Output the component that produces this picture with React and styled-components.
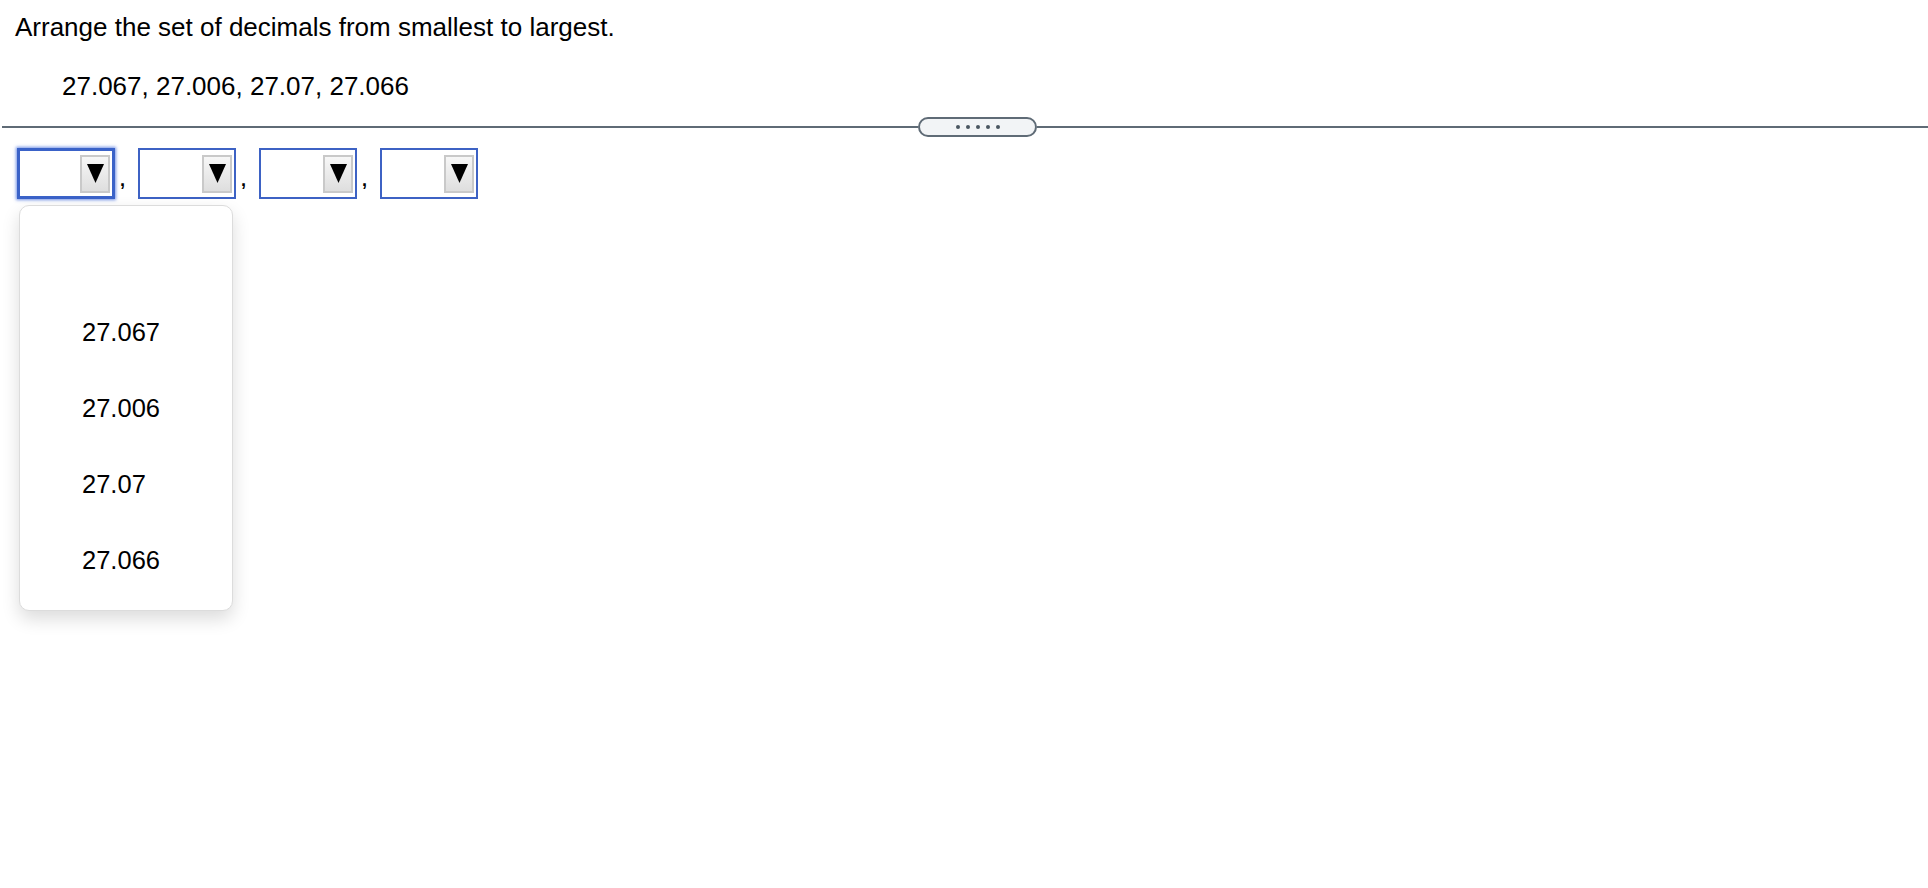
import React from 'react';
import styled, { createGlobalStyle } from 'styled-components';

const GlobalStyle = createGlobalStyle`
  html, body {
    margin: 0;
    padding: 0;
    background: #ffffff;
    font-family: "Liberation Sans", Arial, sans-serif;
    color: #000000;
  }
`

const Page = styled.div`
  width: 1928px;
  height: 888px;
  overflow: hidden;
`

const Question = styled.div`
  padding: 12px 0 0 15px;
  .prompt {
    margin: 0;
    font-size: 26px;
    line-height: 30px;
  }
  .values {
    margin: 29px 0 0 47px;
    font-size: 26px;
    line-height: 30px;
  }
`

const Divider = styled.div`
  display: flex;
  align-items: center;
  margin: 16px 0 0 2px;
  height: 20px;
  .line {
    height: 2px;
    background: #5f6b76;
  }
  .line.left {
    width: 916px;
  }
  .line.right {
    flex: 1;
  }
`

const Pill = styled.div`
  box-sizing: border-box;
  width: 119px;
  height: 20px;
  border: 2px solid #5f6b76;
  border-radius: 10px;
  background: #f2f4f6;
  display: flex;
  align-items: center;
  justify-content: center;
  gap: 6px;
  span {
    width: 4px;
    height: 4px;
    border-radius: 50%;
    background: #4a5560;
  }
`

const AnswerRow = styled.div`
  position: relative;
  display: flex;
  align-items: flex-end;
  margin: 11px 0 0 17px;
`

const Comma = styled.span`
  width: 23px;
  font-size: 18px;
  line-height: 18px;
  font-weight: bold;
  padding: 0 0 10px 5px;
  box-sizing: border-box;
`

const SelectBox = styled.div`
  box-sizing: border-box;
  width: 98px;
  height: 51px;
  display: flex;
  align-items: center;
  justify-content: flex-end;
  padding: 0 2px 0 0;
  border: ${p => (p.$focused ? '3px solid #3a62c8' : '2px solid #3d62c4')};
  box-shadow: ${p => (p.$focused ? '0 0 3px 1px rgba(70, 110, 220, 0.75)' : 'none')};
  background: #ffffff;
`

const ArrowButton = styled.div`
  box-sizing: border-box;
  width: 30px;
  height: 38px;
  border: 2px solid #c9c9c9;
  background: linear-gradient(#f7f7f7, #dedede);
  display: flex;
  align-items: center;
  justify-content: center;
`

const Menu = styled.div`
  position: absolute;
  top: 57px;
  left: 2px;
  box-sizing: border-box;
  width: 214px;
  padding: 12px 0;
  background: #ffffff;
  border: 1px solid #dcdcdc;
  border-radius: 10px;
  box-shadow: 0 8px 18px rgba(0, 0, 0, 0.14);
`

const Option = styled.div`
  height: 76px;
  display: flex;
  align-items: center;
  padding: 0 0 0 62px;
  font-size: 25.5px;
`

const Triangle = () => (
  <svg width="17" height="19" viewBox="0 0 17 19">
    <polygon points="0,0 17,0 8.5,19" fill="#000" />
  </svg>
)

const options = ['', '27.067', '27.006', '27.07', '27.066'];

const Select = ({ focused }) => (
  <SelectBox $focused={focused}>
    <ArrowButton>
      <Triangle />
    </ArrowButton>
  </SelectBox>
)

const App = () => {
  return (
    <Page>
      <GlobalStyle />
      <Question>
        <p className="prompt">Arrange the set of decimals from smallest to largest.</p>
        <div className="values">27.067, 27.006, 27.07, 27.066</div>
      </Question>

      <Divider>
        <div className="line left" />
        <Pill>
          <span /><span /><span /><span /><span />
        </Pill>
        <div className="line right" />
      </Divider>

      <AnswerRow>
        <Select focused />
        <Comma>,</Comma>
        <Select />
        <Comma>,</Comma>
        <Select />
        <Comma>,</Comma>
        <Select />
        <Menu>
          {options.map((o, i) => (
            <Option key={i}>{o}</Option>
          ))}
        </Menu>
      </AnswerRow>
    </Page>
  )
};

export default App;
